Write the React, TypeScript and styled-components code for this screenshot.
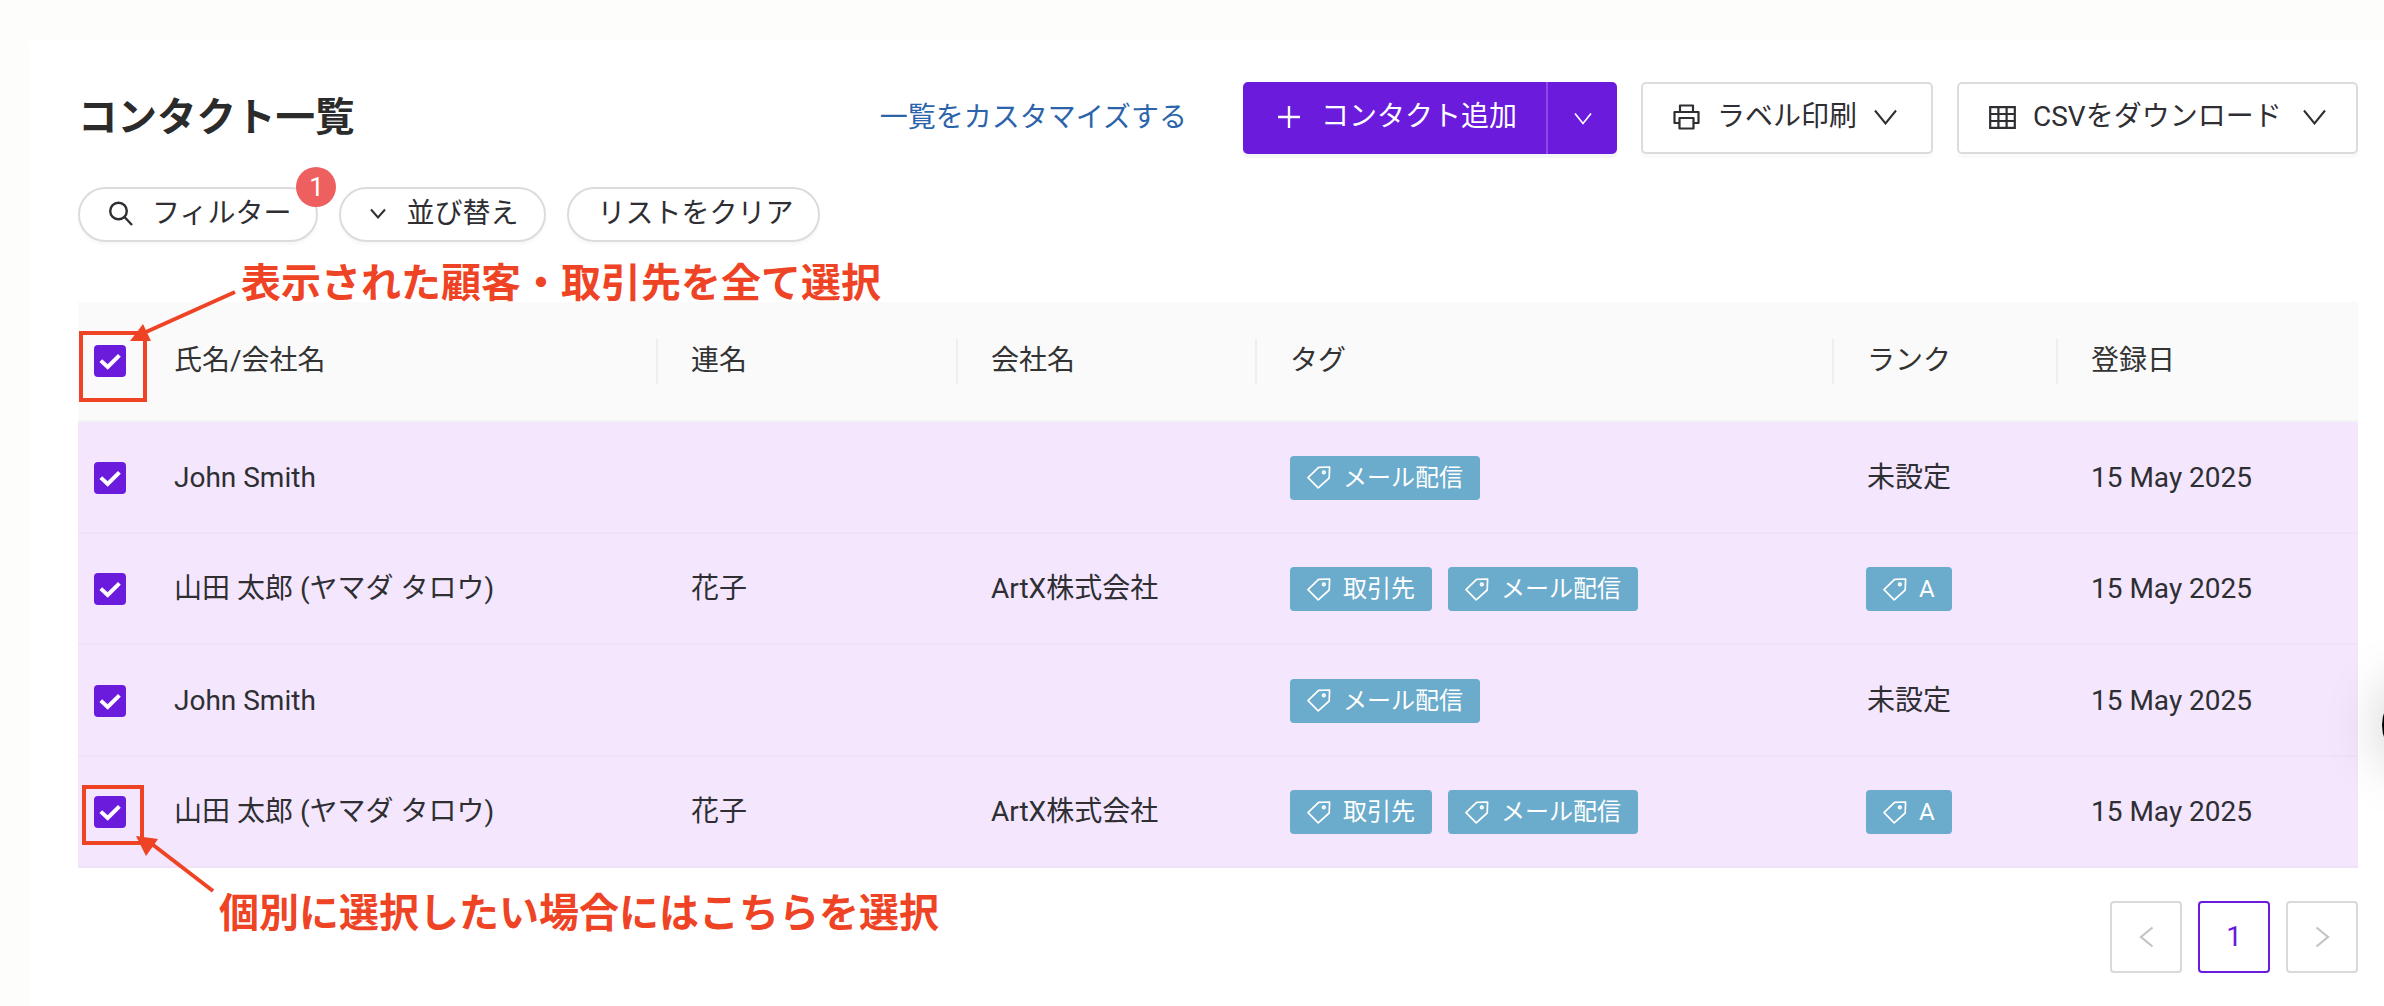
import React from "react";
import styled, { createGlobalStyle } from "styled-components";

const Global = createGlobalStyle`
  html, body { margin: 0; padding: 0; background: #fdfdfb; overflow: hidden; }
  body { font-family: Roboto, "Noto Sans CJK JP", sans-serif; color: #2e2e33; }
  * { box-sizing: border-box; }
`;

const Page = styled.div`
  position: relative;
  width: 2384px;
  height: 1006px;
  padding: 41px 0 0 29px;
  overflow: hidden;
`;
const Panel = styled.main`
  height: 965px;
  background: #fff;
  padding: 41px 26px 0 49px;
  font-size: 28px;
  line-height: 40px;
`;
const TopBar = styled.header`
  display: flex;
  align-items: center;
  height: 72px;
  gap: 24px;
`;
const Title = styled.h1`
  margin: 0 auto 0 0;
  font-size: 39.5px;
  line-height: 56px;
  font-weight: 700;
  color: #2b2b2b;
`;
const CustomLink = styled.a`
  color: #2c64ab;
  white-space: nowrap;
  margin-right: 32px;
  padding-bottom: 1px;
`;
const SplitButton = styled.div`
  display: flex;
  height: 72px;
  border-radius: 5px;
  background: #6a1bdb;
  color: #fff;
  box-shadow: 0 4px 0 rgba(0, 0, 0, 0.04);
`;
const SplitMain = styled.button`
  display: flex;
  align-items: center;
  gap: 21px;
  padding: 0 29px 2px 35px;
  border: 0;
  background: none;
  color: inherit;
  font: inherit;
`;
const SplitCaret = styled.button`
  display: flex;
  align-items: center;
  justify-content: center;
  width: 71px;
  border: 0;
  border-left: 2px solid #8a4ae6;
  background: none;
  color: inherit;
  padding: 0;
`;
const OutlineButton = styled.button<{ $width: number }>`
  display: flex;
  align-items: center;
  gap: 17px;
  width: ${(p) => p.$width}px;
  height: 72px;
  padding: 0 32px 2px 30px;
  border: 2px solid #dcdcdc;
  border-radius: 5px;
  background: #fff;
  color: #2e2e33;
  font: inherit;
  white-space: nowrap;
  box-shadow: 0 4px 0 rgba(0, 0, 0, 0.02);
`;
const CsvLabel = styled.span`
  margin-right: 4px;
`;
const PillRow = styled.div`
  display: flex;
  gap: 21px;
  margin-top: 33px;
`;
const Pill = styled.button<{ $left: number; $right: number; $gap: number }>`
  position: relative;
  display: flex;
  align-items: center;
  gap: ${(p) => p.$gap}px;
  height: 55px;
  padding: 0 ${(p) => p.$right}px 2px ${(p) => p.$left}px;
  border: 2px solid #dcdcdc;
  border-radius: 28px;
  background: #fff;
  color: #2e2e33;
  font: inherit;
  white-space: nowrap;
  box-shadow: 0 3px 3px rgba(0, 0, 0, 0.03);
`;
const Badge = styled.span`
  position: absolute;
  top: -22px;
  right: -20px;
  width: 40px;
  height: 40px;
  border-radius: 50%;
  background: #ee6060;
  color: #fff;
  display: flex;
  align-items: center;
  justify-content: center;
  font-size: 26px;
`;
const Table = styled.section`
  margin-top: 60px;
`;
const COLS = "63px 517px 300px 299px 577px 224px 300px";
const HeaderRow = styled.div`
  display: grid;
  grid-template-columns: ${COLS};
  align-items: center;
  height: 120px;
  background: #fafafa;
  border-bottom: 2px solid #f3f3f3;
`;
const HeadCell = styled.div<{ $divider?: boolean }>`
  height: 45px;
  display: flex;
  align-items: center;
  padding-left: 33px;
  margin-left: ${(p) => (p.$divider ? "-2px" : "0")};
  border-left: ${(p) => (p.$divider ? "2px solid #eeeeee" : "0")};
  color: #333;
`;
const Row = styled.div`
  display: grid;
  grid-template-columns: ${COLS};
  align-items: center;
  height: 111.5px;
  padding-top: 2px;
  background: #f3e6fd;
  border-bottom: 2px solid #efe2f8;
`;
const Cell = styled.div`
  display: flex;
  align-items: center;
  gap: 16px;
  padding-left: 33px;
  white-space: nowrap;
`;
const CheckCell = styled.div`
  display: flex;
  padding-left: 16px;
`;
const Check = styled.span`
  display: flex;
  width: 32px;
  height: 32px;
  border-radius: 4px;
  background: #6a1bdb;
`;
const Tag = styled.span`
  display: inline-flex;
  align-items: center;
  gap: 12px;
  height: 44px;
  padding: 0 17px 0 17px;
  border-radius: 4px;
  background: #6babcb;
  color: #fff;
  font-size: 24px;
`;
const RankTag = styled(Tag)`
  margin-left: -1px;
`;
const Pager = styled.nav`
  display: flex;
  justify-content: flex-end;
  gap: 16px;
  margin-top: 33px;
`;
const PageBox = styled.button<{ $active?: boolean }>`
  display: flex;
  align-items: center;
  justify-content: center;
  width: 72px;
  height: 72px;
  padding: 0;
  border: 2px solid ${(p) => (p.$active ? "#6a1bdb" : "#d9d9d9")};
  border-radius: 4px;
  background: #fff;
  color: ${(p) => (p.$active ? "#6a1bdb" : "#c4c4c4")};
  font: inherit;
`;
const Callout = styled.span<{ $left: number; $top: number }>`
  position: absolute;
  left: ${(p) => p.$left}px;
  top: ${(p) => p.$top}px;
  font-family: "Noto Sans CJK JP", sans-serif;
  font-weight: 700;
  font-size: 40px;
  line-height: 48px;
  color: #ee4425;
  white-space: nowrap;
`;
const MarkupLayer = styled.svg`
  position: absolute;
  left: 0;
  top: 0;
  pointer-events: none;
`;
const FloatingHelp = styled.div`
  position: fixed;
  left: 2382px;
  top: 685px;
  width: 80px;
  height: 80px;
  border-radius: 50%;
  background: #000;
  box-shadow: 0 0 60px rgba(0, 0, 0, 0.22);
`;

const Stroke = styled.svg`
  flex: none;
  fill: none;
  stroke: currentColor;
`;

const Chevron = ({ w = 23, h = 16, sw = 2 }: { w?: number; h?: number; sw?: number }) => (
  <Stroke width={w} height={h} viewBox={`0 0 ${w} ${h}`} strokeWidth={sw}>
    <path d={`M1 1.5 L${w / 2} ${h - 1.5} L${w - 1} 1.5`} />
  </Stroke>
);
const Plus = () => (
  <Stroke width="22" height="24" viewBox="0 0 22 24" strokeWidth="2.4">
    <path d="M0 12H22M11 1V23" />
  </Stroke>
);
const Search = () => (
  <Stroke width="25" height="25" viewBox="0 0 25 25" strokeWidth="2.4">
    <circle cx="10.5" cy="10" r="8.3" />
    <path d="M16.5 16l7.5 8" />
  </Stroke>
);
const Printer = () => (
  <Stroke width="27" height="26" viewBox="0 0 27 26" strokeWidth="2.2" strokeLinejoin="round">
    <path d="M7 8V1.5H20V8" />
    <path d="M6 19H1.5V8H25.5V19H21" />
    <path d="M6.5 14H20.5V24.5H6.5Z" />
  </Stroke>
);
const Grid = () => (
  <Stroke width="27" height="23" viewBox="0 0 27 23" strokeWidth="2.2">
    <path d="M1.2 1.2H25.8V21.8H1.2ZM1.2 8H25.8M1.2 15H25.8M9.4 1.2V21.8M17.6 1.2V21.8" />
  </Stroke>
);
const TagIcon = () => (
  <Stroke width="24" height="23" viewBox="0 0 24 23" strokeWidth="1.7" strokeLinejoin="round">
    <path d="M11.6 1.4L22.6 1 22.2 12 11.2 21.8 1 11.6Z" />
    <circle cx="16.8" cy="6.4" r="1.3" />
  </Stroke>
);
const Tick = () => (
  <Stroke width="32" height="32" viewBox="0 0 32 32" strokeWidth="4">
    <path d="M6.8 15.6L13.7 22 25.4 10.4" stroke="#fff" />
  </Stroke>
);
const PageArrow = ({ d }: { d: string }) => (
  <Stroke width="15" height="22" viewBox="0 0 15 22" strokeWidth="2.2">
    <path d={d} />
  </Stroke>
);

type Person = { name: string; kana: string; company: string; tags: string[]; rank: string | null };
const ROWS: Person[] = [
  { name: "John Smith", kana: "", company: "", tags: ["メール配信"], rank: null },
  { name: "山田 太郎 (ヤマダ タロウ)", kana: "花子", company: "ArtX株式会社", tags: ["取引先", "メール配信"], rank: "A" },
  { name: "John Smith", kana: "", company: "", tags: ["メール配信"], rank: null },
  { name: "山田 太郎 (ヤマダ タロウ)", kana: "花子", company: "ArtX株式会社", tags: ["取引先", "メール配信"], rank: "A" },
];
const HEADERS = ["氏名/会社名", "連名", "会社名", "タグ", "ランク", "登録日"];

export default function App() {
  return (
    <Page>
      <Global />
      <Panel>
        <TopBar>
          <Title>コンタクト一覧</Title>
          <CustomLink>一覧をカスタマイズする</CustomLink>
          <SplitButton>
            <SplitMain>
              <Plus />
              コンタクト追加
            </SplitMain>
            <SplitCaret>
              <Chevron w={18} h={13} sw={1.7} />
            </SplitCaret>
          </SplitButton>
          <OutlineButton $width={292}>
            <Printer />
            ラベル印刷
            <Chevron />
          </OutlineButton>
          <OutlineButton $width={401}>
            <Grid />
            <CsvLabel>CSVをダウンロード</CsvLabel>
            <Chevron />
          </OutlineButton>
        </TopBar>
        <PillRow>
          <Pill $left={28} $right={25} $gap={19}>
            <Search />
            フィルター
            <Badge>1</Badge>
          </Pill>
          <Pill $left={29} $right={26} $gap={20}>
            <Chevron w={16} h={11} />
            並び替え
          </Pill>
          <Pill $left={28} $right={25} $gap={0}>
            リストをクリア
          </Pill>
        </PillRow>
        <Table>
          <HeaderRow>
            <CheckCell>
              <Check>
                <Tick />
              </Check>
            </CheckCell>
            {HEADERS.map((h, i) => (
              <HeadCell key={h} $divider={i > 0}>
                {h}
              </HeadCell>
            ))}
          </HeaderRow>
          {ROWS.map((r, i) => (
            <Row key={i}>
              <CheckCell>
                <Check>
                  <Tick />
                </Check>
              </CheckCell>
              <Cell>{r.name}</Cell>
              <Cell>{r.kana}</Cell>
              <Cell>{r.company}</Cell>
              <Cell>
                {r.tags.map((t) => (
                  <Tag key={t}>
                    <TagIcon />
                    {t}
                  </Tag>
                ))}
              </Cell>
              <Cell>
                {r.rank ? (
                  <RankTag>
                    <TagIcon />
                    {r.rank}
                  </RankTag>
                ) : (
                  "未設定"
                )}
              </Cell>
              <Cell>15 May 2025</Cell>
            </Row>
          ))}
        </Table>
        <Pager>
          <PageBox>
            <PageArrow d="M13.5 1.5L2 11 13.5 20.5" />
          </PageBox>
          <PageBox $active>1</PageBox>
          <PageBox>
            <PageArrow d="M1.5 1.5L13 11 1.5 20.5" />
          </PageBox>
        </Pager>
      </Panel>

      <Callout $left={241} $top={256}>表示された顧客・取引先を全て選択</Callout>
      <Callout $left={219} $top={886}>個別に選択したい場合にはこちらを選択</Callout>
      <MarkupLayer width="2384" height="1006" viewBox="0 0 2384 1006">
        <rect x="81" y="333" width="64" height="67" fill="none" stroke="#ee4425" strokeWidth="4" />
        <path d="M235 292L146 332" stroke="#ee4425" strokeWidth="4" fill="none" />
        <path d="M143 324L151 341H130Z" fill="#ee4425" />
        <rect x="84" y="787" width="58" height="56" fill="none" stroke="#ee4425" strokeWidth="4" />
        <path d="M213 891L148 841" stroke="#ee4425" strokeWidth="4" fill="none" />
        <path d="M136 836L158 839 146 856Z" fill="#ee4425" />
      </MarkupLayer>
      <FloatingHelp />
    </Page>
  );
}
